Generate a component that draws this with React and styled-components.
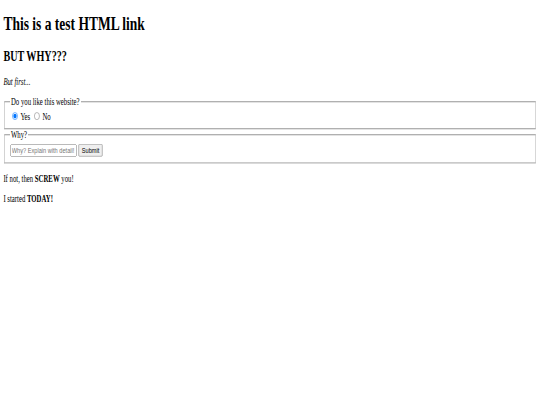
import React from 'react';
import styled, { createGlobalStyle } from 'styled-components';

const GlobalStyle = createGlobalStyle`
  html, body {
    margin: 0;
    padding: 0;
    overflow: hidden;
    background: #ffffff;
  }
`;

// the reference is a 1280px wide page squeezed into 540x405
const Frame = styled.div`
  display: flow-root;
  width: 1280px;
  transform: scale(0.421875, 0.6);
  transform-origin: 0 0;
  font-family: 'Liberation Serif', 'Times New Roman', serif;
  font-size: 16px;
  color: #000;
`;

const Body = styled.div`
  margin: 8px;
`;

const Title = styled.h1`
  font-size: 2em;
  font-weight: bold;
  margin: 0.67em 0;
`;

const Subtitle = styled.h2`
  font-size: 1.5em;
  font-weight: bold;
  margin: 0.83em 0;
`;

const Para = styled.p`
  margin: 1em 0;
`;

const Fieldset = styled.fieldset`
  margin: 0 2px;
  padding: 0.35em 0.75em 0.625em;
  border: 2px groove #d0d0d0;
`;

const Legend = styled.legend`
  padding: 0 2px;
`;

const Radio = styled.input.attrs({ type: 'radio', name: 'like' })`
  margin: 3px 3px 0 5px;
`;

const TextBox = styled.input.attrs({ type: 'text' })`
  box-sizing: border-box;
  width: 158px;
  font-family: 'Liberation Sans', Arial, sans-serif;
  font-size: 13.333px;
`;

const SubmitButton = styled.input.attrs({ type: 'submit' })`
  font-family: 'Liberation Sans', Arial, sans-serif;
  font-size: 13.333px;
`;

export default function App() {
  return (
    <>
      <GlobalStyle />
      <Frame>
        <Body>
          <Title>This is a test HTML link</Title>
          <Subtitle>BUT WHY???</Subtitle>
          <Para>
            <i>But first...</i>
          </Para>
          <form onSubmit={(e) => e.preventDefault()}>
            <Fieldset>
              <Legend>Do you like this website?</Legend>
              <Radio defaultChecked id="yes" /> <label htmlFor="yes">Yes</label>{' '}
              <Radio id="no" /> <label htmlFor="no">No</label>
            </Fieldset>
            <Fieldset>
              <Legend>Why?</Legend>
              <TextBox placeholder="Why? Explain with detail!" /> <SubmitButton value="Submit" />
            </Fieldset>
          </form>
          <Para>
            If not, then <b>SCREW</b> you!
          </Para>
          <Para>
            I started <b>TODAY!</b>
          </Para>
        </Body>
      </Frame>
    </>
  );
}
